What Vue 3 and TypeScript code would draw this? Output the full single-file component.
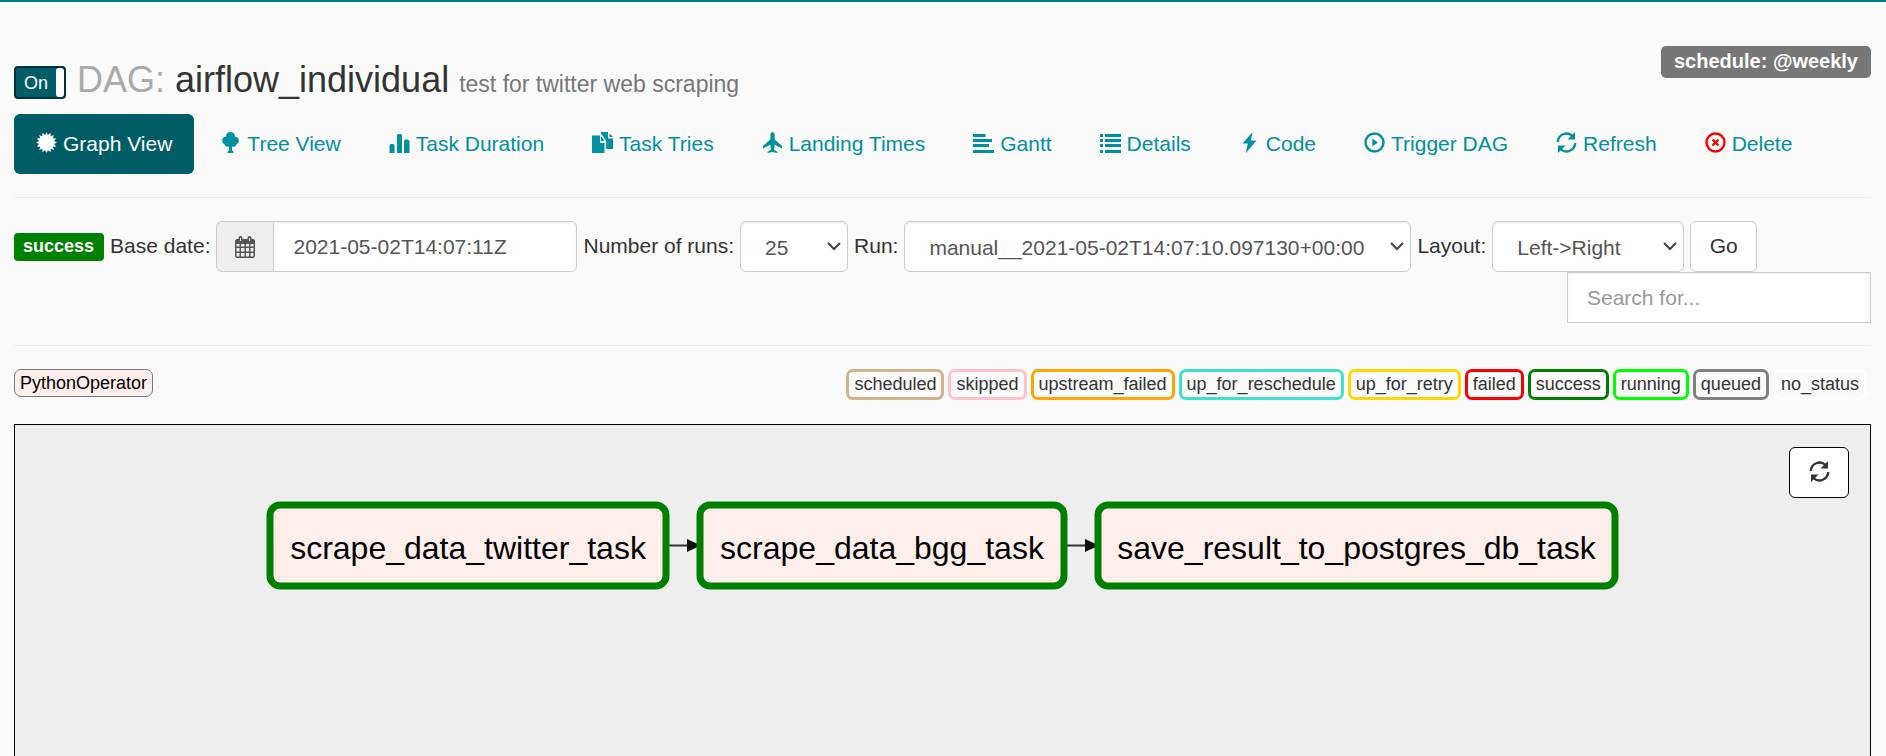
<script setup lang="ts">
import { ref } from 'vue'

interface NavItem { label: string; icon: string; active?: boolean }
interface Status { label: string; color: string }
interface TaskNode { id: string; x: number; width: number }

const nav: NavItem[] = [
  { label: 'Graph View', icon: 'certificate', active: true },
  { label: 'Tree View', icon: 'tree' },
  { label: 'Task Duration', icon: 'stats' },
  { label: 'Task Tries', icon: 'duplicate' },
  { label: 'Landing Times', icon: 'plane' },
  { label: 'Gantt', icon: 'align' },
  { label: 'Details', icon: 'list' },
  { label: 'Code', icon: 'flash' },
  { label: 'Trigger DAG', icon: 'play' },
  { label: 'Refresh', icon: 'refresh' },
  { label: 'Delete', icon: 'remove' },
]

const statuses: Status[] = [
  { label: 'scheduled', color: 'tan' },
  { label: 'skipped', color: 'pink' },
  { label: 'upstream_failed', color: 'orange' },
  { label: 'up_for_reschedule', color: 'turquoise' },
  { label: 'up_for_retry', color: 'gold' },
  { label: 'failed', color: 'red' },
  { label: 'success', color: 'green' },
  { label: 'running', color: 'lime' },
  { label: 'queued', color: 'gray' },
  { label: 'no_status', color: 'white' },
]

const tasks: TaskNode[] = [
  { id: 'scrape_data_twitter_task', x: 255, width: 396 },
  { id: 'scrape_data_bgg_task', x: 685, width: 364 },
  { id: 'save_result_to_postgres_db_task', x: 1083, width: 517 },
]
const nodeTop = 80
const nodeHeight = 81

const edges = tasks.slice(1).map((t, i) => ({
  from: tasks[i].x + tasks[i].width + 3,
  to: t.x,
}))

// Sixteen-point seal outline inside a 21 x 21 box.
const seal = Array.from({ length: 32 }, (_, i) => {
  const r = i % 2 ? 7.6 : 10.5
  const a = (i * Math.PI) / 16
  return `${(10.5 + r * Math.sin(a)).toFixed(2)},${(10.5 - r * Math.cos(a)).toFixed(2)}`
}).join(' ')

const enabled = ref(true)
const baseDate = ref('2021-05-02T14:07:11Z')
const runs = ref('25')
const run = ref('manual__2021-05-02T14:07:10.097130+00:00')
const layout = ref('Left->Right')
const search = ref('')
</script>

<template>
  <div class="page">
    <header class="head">
      <h1 class="title">
        <label class="toggle">
          <input v-model="enabled" type="checkbox" aria-label="DAG enabled" />
          <span class="toggle-text">{{ enabled ? 'On' : 'Off' }}</span>
          <span class="toggle-knob"></span>
        </label>
        <span class="kind">DAG:</span>
        <span class="name">airflow_individual</span>
        <small class="desc">test for twitter web scraping</small>
      </h1>
      <span class="schedule">schedule: @weekly</span>
    </header>

    <nav class="pills">
      <a v-for="item in nav" :key="item.label" href="#" class="pill" :class="{ active: item.active }">
        <svg class="icon" :class="{ danger: item.icon === 'remove' }" viewBox="0 0 21 21" aria-hidden="true">
          <polygon v-if="item.icon === 'certificate'" :points="seal" />
          <g v-else-if="item.icon === 'tree'">
            <circle cx="10.500" cy="4.500" r="4.500" />
            <circle cx="6" cy="8.500" r="3.800" />
            <circle cx="15" cy="8.500" r="3.800" />
            <circle cx="8" cy="11.200" r="3.600" />
            <circle cx="13" cy="11.200" r="3.600" />
            <path d="M9 12h3v6.500l1.500 1V21h-6v-1.500L9 18.500z" />
          </g>
          <g v-else-if="item.icon === 'stats'">
            <path d="M.5 21v-7.500l1-1.500h3l1 1.500V21zM8 21V3l1-1h3l1 1v18zM15 21V9l1-1.500h3L20.500 9v12z" />
          </g>
          <g v-else-if="item.icon === 'duplicate'">
            <path d="M0 3.500h8v7.500h4.500v10H0z" />
            <path d="M9 4l3.500 5H9z" />
            <path d="M9 0h7v6.500h5V17h-6.800V9L9 1.500z" />
            <path d="M17.500 1.500L21 5h-3.500z" />
          </g>
          <g v-else-if="item.icon === 'plane'">
            <path d="M10.500 0c1.500 0 2.200 2 2.200 4v3.500L20 14v2.500l-7.300-3.800-.7 4.800 3.500 2.500v1L10.500 20l-5 1v-1L9 17.500l-.7-4.800L1 16.500V14l7.300-6.500V4c0-2 .7-4 2.200-4z" />
          </g>
          <g v-else-if="item.icon === 'align'">
            <path d="M0 2h12.500v3H0zM0 7h19v3H0zM0 12h16v3H0zM0 18h21v3H0z" />
          </g>
          <g v-else-if="item.icon === 'list'">
            <path d="M0 2h3v3H0zM0 7h3v3H0zM0 12h3v3H0zM0 18h3v3H0zM5 2h16v3H5zM5 7h16v3H5zM5 12h16v3H5zM5 18h16v3H5z" />
          </g>
          <path v-else-if="item.icon === 'flash'" d="M13.500 0L3.500 11.500h5.200L7 21l10.500-12.500h-5.700z" />
          <g v-else-if="item.icon === 'play'">
            <circle class="ring" cx="10.500" cy="10.500" r="9" />
            <path d="M8.300 6.500l5.500 4-5.500 4z" />
          </g>
          <g v-else-if="item.icon === 'refresh'">
            <path class="arc" d="M1.800 10A8.700 8.700 0 0 1 16.500 4M19.200 11A8.700 8.700 0 0 1 4.500 17" />
            <path d="M19 0v7.500h-7.500zM2 21v-7.500h7.500z" />
          </g>
          <g v-else>
            <circle class="ring" cx="10.500" cy="10.500" r="9" />
            <path class="cross" d="M7.500 7.500l6 6M13.500 7.500l-6 6" />
          </g>
        </svg>
        {{ item.label }}
      </a>
    </nav>

    <hr class="rule" />

    <form class="filters" @submit.prevent>
      <span class="state">success</span>
      <label for="base-date">Base date:</label>
      <span class="group">
        <span class="addon">
          <svg class="calendar" viewBox="0 0 20 22" aria-hidden="true">
            <path fill-rule="evenodd" d="M1.500 3H3.500V2a1.500 1.500 0 0 1 4 0V3H12.500V2a1.500 1.500 0 0 1 4 0V3H18.500L20 4.500V20.500L18.500 22H1.500L0 20.500V4.500zM1.500 8v2.500h3V8zM6 8v2.500h3.500V8zM11 8v2.500h3V8zM15.500 8v2.500h3V8zM1.500 12v3.500h3V12zM6 12v3.500h3.500V12zM11 12v3.500h3V12zM15.500 12v3.500h3V12zM1.500 17v3.500h3V17zM6 17v3.500h3.500V17zM11 17v3.500h3V17zM15.500 17v3.500h3V17zM5 2v3h1V2zM14 2v3h1V2z" />
          </svg>
        </span>
        <input id="base-date" v-model="baseDate" class="control date" type="text" />
      </span>
      <label for="runs">Number of runs:</label>
      <span class="pick">
        <select id="runs" v-model="runs" class="control runs"><option>25</option></select>
        <svg class="chevron" viewBox="0 0 14 9" aria-hidden="true"><path d="M1 1l6 6 6-6" /></svg>
      </span>
      <label for="run">Run:</label>
      <span class="pick">
        <select id="run" v-model="run" class="control run"><option>manual__2021-05-02T14:07:10.097130+00:00</option></select>
        <svg class="chevron" viewBox="0 0 14 9" aria-hidden="true"><path d="M1 1l6 6 6-6" /></svg>
      </span>
      <label for="layout">Layout:</label>
      <span class="pick">
        <select id="layout" v-model="layout" class="control layout"><option>Left-&gt;Right</option></select>
        <svg class="chevron" viewBox="0 0 14 9" aria-hidden="true"><path d="M1 1l6 6 6-6" /></svg>
      </span>
      <button class="go" type="submit">Go</button>
    </form>
    <div class="search-row">
      <input v-model="search" class="control search" type="text" placeholder="Search for..." aria-label="Search for" />
    </div>

    <hr class="rule" />

    <div class="legend">
      <span class="operator">PythonOperator</span>
      <div class="statuses">
        <span v-for="s in statuses" :key="s.label" class="status" :style="{ borderColor: s.color }">{{ s.label }}</span>
      </div>
    </div>

    <main class="canvas">
      <svg class="graph" role="img" aria-label="Task graph">
        <g v-for="e in edges" :key="e.to">
          <line class="edge" :x1="e.from" :x2="e.to - 10" y1="120.500" y2="120.500" />
          <polygon class="tip" :points="`${e.to - 13},114 ${e.to + 1},120.500 ${e.to - 13},127`" />
        </g>
        <g v-for="t in tasks" :key="t.id">
          <rect class="node" :x="t.x" :y="nodeTop" :width="t.width" :height="nodeHeight" rx="10" />
          <text class="node-text" :x="t.x + t.width / 2" :y="nodeTop + 54">{{ t.id }}</text>
        </g>
      </svg>
      <button class="reload" type="button" aria-label="Refresh graph">
        <svg class="icon" viewBox="0 0 21 21" aria-hidden="true">
          <path class="arc" d="M1.800 10A8.700 8.700 0 0 1 16.500 4M19.200 11A8.700 8.700 0 0 1 4.500 17" />
          <path d="M19 0v7.500h-7.500zM2 21v-7.500h7.500z" />
        </svg>
      </button>
    </main>
  </div>
</template>

<style>
body {
  margin: 0;
  background: #fafafa;
}
</style>

<style scoped>
* {
  box-sizing: border-box;
}
.page {
  display: flex;
  flex-direction: column;
  height: 100vh;
  overflow: hidden;
  padding: 0 15px 0 14px;
  border-top: 2px solid #007a87;
  background: #fafafa;
  color: #333;
  font: 21px/30px "Liberation Sans", Arial, sans-serif;
}
.head {
  display: flex;
  justify-content: space-between;
  align-items: flex-start;
  padding-top: 44px;
}
.title {
  display: flex;
  align-items: baseline;
  margin: 14px 0 0;
  font-size: 36px;
  font-weight: 400;
  line-height: 40px;
}
.toggle {
  display: flex;
  align-self: flex-start;
  width: 52px;
  height: 33px;
  margin: 6px 11px 0 0;
  border: 2px solid #00343a;
  border-radius: 4px;
  overflow: hidden;
  background: #005c66;
  color: #fff;
  font-size: 18px;
  line-height: 31px;
}
.toggle input {
  position: absolute;
  opacity: 0;
}
.toggle-text {
  flex: 1;
  text-align: center;
}
.toggle-knob {
  width: 8px;
  border-radius: 3px;
  background: #fff;
}
.kind {
  margin-right: 10px;
  color: #aaa;
}
.desc {
  margin-left: 10px;
  color: #777;
  font-size: 23px;
}
.schedule {
  height: 32px;
  padding: 0 13px;
  border-radius: 5px;
  background: #777;
  color: #fff;
  font-size: 20px;
  font-weight: 700;
  line-height: 30px;
}
.pills {
  display: flex;
  gap: 4px;
  margin-top: 10px;
}
.pill {
  display: flex;
  align-items: center;
  gap: 6px;
  padding: 15px 22px;
  border-radius: 6px;
  color: #0090a0;
  text-decoration: none;
  white-space: nowrap;
}
.pill.active {
  background: #005c66;
  color: #fff;
}
.icon {
  width: 21px;
  height: 21px;
  margin-bottom: 3px;
  fill: currentColor;
}
.danger {
  color: #f00;
}
.ring,
.arc,
.cross {
  fill: none;
  stroke: currentColor;
  stroke-width: 2.4;
}
.rule {
  flex: none;
  width: 100%;
  height: 1px;
  margin: 23px 0;
  border: 0;
  background: #eee;
}
.search-row + .rule {
  margin-top: 22px;
}
.filters {
  display: flex;
  align-items: center;
  gap: 6px;
  white-space: nowrap;
}
.filters label {
  margin-bottom: 2px;
}
.state {
  height: 28px;
  padding: 0 10px 0 9px;
  border-radius: 4px;
  background: green;
  color: #fff;
  font-size: 18px;
  font-weight: 700;
  line-height: 26px;
}
.group,
.pick {
  display: flex;
}
.addon {
  display: flex;
  align-items: center;
  justify-content: center;
  width: 57px;
  border: 1px solid #ccc;
  border-right: 0;
  border-radius: 6px 0 0 6px;
  background: #eee;
}
.calendar {
  width: 20px;
  height: 22px;
  fill: #555;
}
.control {
  height: 51px;
  padding: 0 19px;
  border: 1px solid #ccc;
  border-radius: 6px;
  outline: 0;
  background: #fff;
  box-shadow: inset 0 1px 2px rgba(0, 0, 0, 0.08);
  color: #555;
  font: inherit;
  appearance: none;
}
select.control {
  padding: 2px 20px 0 24px;
}
.date {
  width: 304px;
  border-radius: 0 6px 6px 0;
}
.runs {
  width: 108px;
}
.run {
  width: 507px;
}
.layout {
  width: 192px;
}
.pick {
  position: relative;
}
.chevron {
  position: absolute;
  top: 21px;
  right: 7px;
  width: 14px;
  height: 9px;
  pointer-events: none;
  fill: none;
  stroke: #444;
  stroke-width: 2;
}
.go {
  width: 67px;
  height: 51px;
  padding: 0 0 2px;
  border: 1px solid #ccc;
  border-radius: 6px;
  background: #fff;
  color: #333;
  font: inherit;
}
.search-row {
  display: flex;
  justify-content: flex-end;
}
.search {
  width: 304px;
  border-radius: 0;
}
.search::placeholder {
  color: #999;
  opacity: 1;
}
.legend {
  display: flex;
  justify-content: space-between;
  align-items: flex-start;
  font-size: 18px;
}
.operator {
  height: 28px;
  padding: 0 5px;
  border: 1px solid #777;
  border-radius: 7px;
  background: #ffefeb;
  color: #000;
  line-height: 26px;
}
.statuses {
  display: flex;
  gap: 4px;
  margin-right: 4px;
}
.status {
  height: 31px;
  padding: 0 5px;
  border: 3px solid;
  border-radius: 7px;
  line-height: 24px;
}
.canvas {
  position: relative;
  flex: none;
  height: 750px;
  margin-top: 24px;
  border: 1px solid #000;
  background: #eee;
}
.graph {
  display: block;
  width: 100%;
  height: 100%;
}
.node {
  fill: #ffefeb;
  stroke: green;
  stroke-width: 7;
}
.node-text {
  fill: #000;
  font-size: 32px;
  text-anchor: middle;
}
.edge {
  stroke: #333;
  stroke-width: 2;
}
.tip {
  fill: #111;
}
.reload {
  position: absolute;
  top: 22px;
  right: 21px;
  display: flex;
  align-items: center;
  justify-content: center;
  width: 60px;
  height: 51px;
  border: 1px solid #000;
  border-radius: 6px;
  background: #fff;
  color: #333;
}
</style>
